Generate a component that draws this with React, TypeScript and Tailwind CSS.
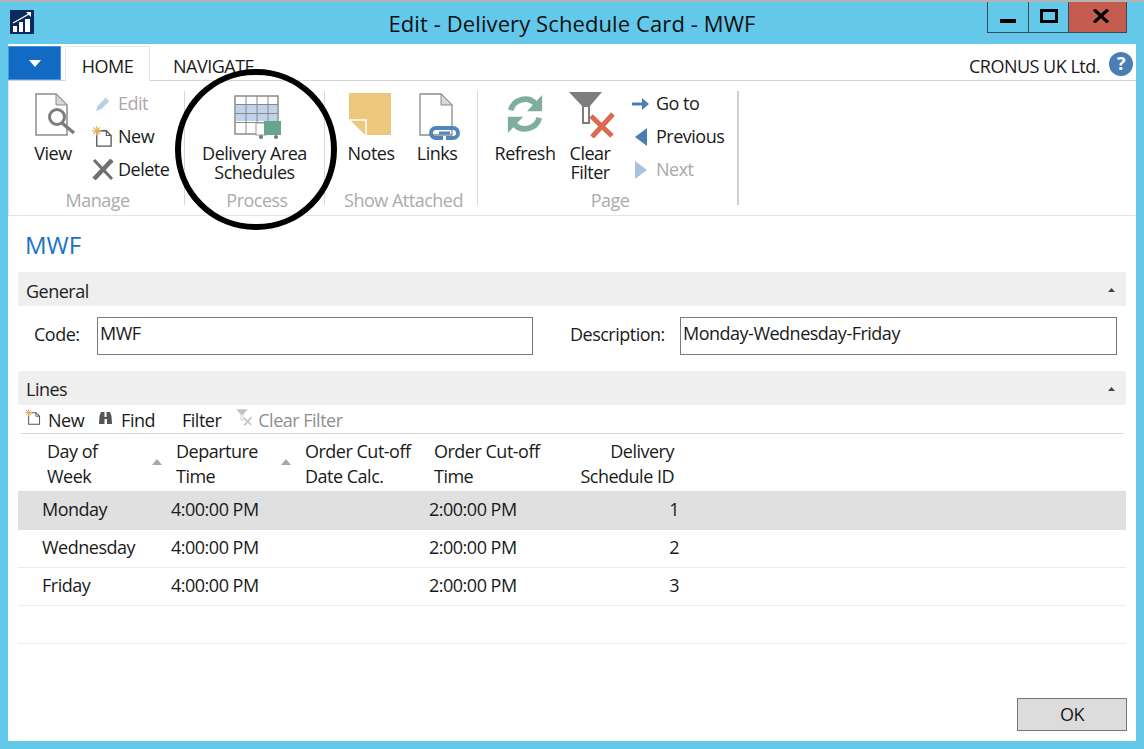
import type { ReactNode } from 'react'

const font = { fontFamily: '"Open Sans", "Noto Sans", sans-serif' }

function ViewIcon() {
  return (
    <svg className="ml-[6px]" width="42" height="43" viewBox="0 0 42 43" fill="none">
      <path d="M1 1h20l11 11v30H1z" fill="#fff" stroke="#8c8c8c" strokeWidth="1.500" />
      <path d="M21 1v11h11z" fill="#d8d8d8" stroke="#8c8c8c" />
      <circle cx="22" cy="24" r="7.500" fill="#fff" stroke="#7d7d7d" strokeWidth="3" />
      <path d="M27 30l12 10" stroke="#7d7d7d" strokeWidth="3.500" />
    </svg>
  )
}

function EditIcon() {
  return (
    <svg className="ml-[3px]" width="16" height="16" viewBox="0 0 18 18">
      <path d="M1 17l2-6L12 2l4 4-9 9z" fill="#b9cfe6" />
      <path d="M12 2l4 4-2 2-4-4z" fill="#cfcfcf" />
    </svg>
  )
}

function NewIcon({ small }: { small?: boolean }) {
  const size = small ? 16 : 21
  return (
    <svg width={size} height={size} viewBox="0 0 22 22" fill="none">
      <path d="M5 5h10l5 5v11H5z" stroke="#555" strokeWidth="1.400" fill="#fff" />
      <path d="M15 5v5h5" stroke="#555" strokeWidth="1.200" />
      <path d="M5 0v10M0 5h10M1.500 1.500l7 7M8.500 1.500l-7 7" stroke="#eab15a" strokeWidth="1.300" />
    </svg>
  )
}

function DeleteIcon() {
  return (
    <svg width="22" height="21" viewBox="0 0 22 21" fill="none">
      <path d="M2 1l18 19" stroke="#6f6f6f" strokeWidth="3" />
      <path d="M20 1L2 20" stroke="#6f6f6f" strokeWidth="4.500" />
    </svg>
  )
}

function ScheduleIcon() {
  return (
    <svg width="48" height="44" viewBox="0 0 48 44" fill="none">
      <rect x="1" y="1" width="43" height="38" fill="#fff" stroke="#8a8a8a" strokeWidth="1.500" />
      <rect x="2" y="10" width="41" height="16" fill="#c0d3ea" />
      <path d="M1 9.500h43M1 18.500h43M1 27.500h43M12 1v38M23 1v38M34 1v38" stroke="#8a8a8a" strokeWidth="1" />
      <rect x="22" y="28" width="10" height="12" fill="#fff" stroke="#9a9a9a" />
      <rect x="30" y="26" width="17" height="14" fill="#66a58e" />
      <circle cx="27" cy="42" r="2" fill="#777" />
      <circle cx="42" cy="42" r="2" fill="#777" />
    </svg>
  )
}

function NotesIcon() {
  return (
    <svg className="-ml-[2px]" width="42" height="42" viewBox="0 0 42 42">
      <path d="M0 0h42v42H16L0 26z" fill="#ecc77e" />
      <path d="M1 27h16v15" fill="none" stroke="#fff" strokeWidth="1.500" />
      <path d="M1 28l15 14H1z" fill="#fff" />
    </svg>
  )
}

function LinksIcon() {
  return (
    <svg className="ml-[6px]" width="42" height="47" viewBox="0 0 42 47" fill="none">
      <path d="M1 1h21l11 11v30H1z" fill="#fff" stroke="#8c8c8c" strokeWidth="1.300" />
      <path d="M22 1v11h11z" fill="#d9d9d9" stroke="#8c8c8c" />
      <path d="M22 35h-5a5 5 0 0 0 0 10h7" stroke="#4f87bd" strokeWidth="4" />
      <path d="M19 35h15a5 5 0 0 1 0 10h-7" stroke="#4f87bd" strokeWidth="4" />
      <path d="M20 40h11" stroke="#4f87bd" strokeWidth="3" />
    </svg>
  )
}

function RefreshIcon() {
  return (
    <svg width="42" height="40" viewBox="0 0 42 42" fill="none">
      <path d="M6 17A15.500 15.500 0 0 1 32 10" stroke="#7fae9c" strokeWidth="6" />
      <path d="M39 1v17H23z" fill="#7fae9c" />
      <path d="M36 25A15.500 15.500 0 0 1 10 32" stroke="#7fae9c" strokeWidth="6" />
      <path d="M3 41V24h16z" fill="#7fae9c" />
    </svg>
  )
}

function ClearFilterIcon({ small }: { small?: boolean }) {
  const w = small ? 17 : 48
  const h = small ? 17 : 46
  const funnel = small ? '#c2c2c2' : '#7d7d7d'
  const cross = small ? '#c6c6c6' : '#dc6a50'
  return (
    <svg className={small ? '' : 'ml-[6px]'} width={w} height={h} viewBox="0 0 48 46" fill="none">
      <path d="M0 0h33L21 14v18h-8V14z" fill={funnel} />
      <path d="M15 15v15h4V15z" fill="#fff" />
      <path d="M22 24l21 20M44 22L23 45" stroke={cross} strokeWidth="5" />
    </svg>
  )
}

function Arrow({ dir, faded }: { dir: 'right' | 'left' | 'next'; faded?: boolean }) {
  const color = faded ? '#a9c3de' : '#4a7fb5'
  if (dir === 'right') {
    return (
      <svg className="ml-[2px]" width="18" height="14" viewBox="0 0 18 14">
        <path d="M0 5.500h10V1l7 6-7 6V8.500H0z" fill={color} />
      </svg>
    )
  }
  return (
    <svg className="ml-[5px]" width="12" height="18" viewBox="0 0 12 18">
      <path d={dir === 'left' ? 'M12 0v18L0 9z' : 'M0 0v18l12-9z'} fill={color} />
    </svg>
  )
}

function SmallAction({ icon, label, faded }: { icon: ReactNode; label: string; faded?: boolean }) {
  return (
    <div className="h-[33px] flex items-center">
      <div className="w-[26px] flex justify-start shrink-0">{icon}</div>
      <span className={faded ? 'text-[#a8a8a8]' : 'text-[#1a1a1a]'}>{label}</span>
    </div>
  )
}

function BigAction({ icon, label, width, iconTop }: { icon: ReactNode; label: ReactNode; width: string; iconTop: string }) {
  return (
    <div className={`flex flex-col items-center ${width}`}>
      <div className={`h-[48px] flex items-start justify-center ${iconTop}`}>{icon}</div>
      <div className="mt-[5px] leading-[19px] text-center text-[#1a1a1a] whitespace-nowrap">{label}</div>
    </div>
  )
}

function Group({ label, width, children, last, nudge }: { label: string; width: string; children: ReactNode; last?: boolean; nudge?: string }) {
  return (
    <div className={`${width} h-[114px] mt-[10px] flex flex-col border-r ${last ? 'border-[#cfcfcf] border-r-2' : 'border-[#d8d8d8]'}`}>
      <div className="h-[99px] shrink-0 flex">{children}</div>
      <div className={`h-[20px] shrink-0 text-center text-[#ababab] leading-[20px] whitespace-nowrap ${nudge ?? ''}`}>{label}</div>
    </div>
  )
}

function SectionBar({ title, textPad }: { title: string; textPad: string }) {
  return (
    <div className="h-[34px] shrink-0 mx-[10px] bg-[#efefef] flex items-center justify-between pl-[8px] pr-[11px]">
      <span className={`text-[#222] ${textPad}`}>{title}</span>
      <svg width="7" height="5" viewBox="0 0 7 5"><path d="M0 5l3.500-4L7 5z" fill="#444" /></svg>
    </div>
  )
}

function SortMark() {
  return (
    <svg className="absolute right-[14px] top-[20px]" width="10" height="6" viewBox="0 0 10 6">
      <path d="M0 6l5-6 5 6z" fill="#a8a8a8" />
    </svg>
  )
}

const rows = [
  { day: 'Monday', id: 1, selected: true },
  { day: 'Wednesday', id: 2, selected: false },
  { day: 'Friday', id: 3, selected: false },
]

export default function App() {
  return (
    <div className="relative w-[1144px] h-[749px] overflow-hidden bg-[#63c8ea] border-t-2 border-[#b3b3b3] flex flex-col text-[18px] tracking-[-0.5px] text-[#1a1a1a]" style={font}>
      {/* Title bar */}
      <div className="relative h-[42px] shrink-0 flex items-start justify-center">
        <div className="absolute left-[10px] top-[8px] w-[24px] h-[24px] bg-[#0b2a5c]">
          <svg width="24" height="24" viewBox="0 0 24 24">
            <path d="M3 22v-6h4v6zM9 22V12h4v10zM15 22V9h5v13z" fill="#fff" />
            <path d="M3 13L19 4" stroke="#fff" strokeWidth="1.300" />
            <path d="M16 2h5v5z" fill="#fff" />
          </svg>
        </div>
        <div className="text-[22px] tracking-[0.1px] leading-[26px] mt-[8px] text-[#111]">Edit - Delivery Schedule Card - MWF</div>
        <div className="absolute left-[987px] top-0 h-[31px] flex border border-t-0 border-[#3b4a52]">
          <div className="w-[41px] flex items-center justify-center border-r border-[#3b4a52]">
            <div className="w-[16px] h-[4px] bg-black mt-[8px]" />
          </div>
          <div className="w-[39px] flex items-center justify-center">
            <div className="w-[18px] h-[14px] border-[3px] border-black -mt-[3px]" />
          </div>
          <div className="w-[58px] flex items-center justify-center bg-[#c45c50] border-l border-[#3b4a52] pl-[6px]">
            <svg className="-mt-[3px]" width="16" height="14" viewBox="0 0 16 14"><path d="M1 0.500l14 13M15 0.500L1 13.500" stroke="#000" strokeWidth="3.200" /></svg>
          </div>
        </div>
      </div>

      {/* Window body */}
      <div className="relative mx-[8px] mb-[8px] flex-1 bg-white flex flex-col">
        {/* Tab strip */}
        <div className="h-[37px] shrink-0 flex items-end border-b border-[#d4d4d4]">
          <div className="w-[53px] h-[34px] bg-[#116bc4] border border-[#4f95da] flex items-center justify-center">
            <svg width="12" height="7" viewBox="0 0 12 7"><path d="M0 0h12L6 7z" fill="#fff" /></svg>
          </div>
          <div className="ml-[4px] w-[85px] h-[35px] -mb-[1px] pt-[5px] bg-white border border-b-0 border-[#dfe8f0] flex items-center justify-center">HOME</div>
          <div className="ml-[23px] h-[34px] pt-[6px] flex items-center">NAVIGATE</div>
          <div className="ml-auto h-[34px] flex items-center pr-[3px]">
            <span className="pt-[6px]">CRONUS UK Ltd.</span>
            <div className="ml-[9px] mt-[1px] w-[24px] h-[24px] rounded-full bg-[#4a7fb5] flex items-center justify-center text-white font-bold">?</div>
          </div>
        </div>

        {/* Ribbon */}
        <div className="h-[135px] shrink-0 flex pl-[2px] bg-white border-b border-l border-[#e4e4e4]">
          <Group label="Manage" width="w-[174px]">
            <div className="w-[81px] pl-[12px]">
              <BigAction width="w-[60px]" iconTop="pt-[2px]" icon={<ViewIcon />} label="View" />
            </div>
            <div className="-mt-[4px]">
              <SmallAction faded icon={<EditIcon />} label="Edit" />
              <SmallAction icon={<NewIcon />} label="New" />
              <SmallAction icon={<DeleteIcon />} label="Delete" />
            </div>
          </Group>
          <Group label="Process" width="w-[140px]" nudge="pl-[5px]">
            <BigAction width="w-[140px]" iconTop="pt-[4px] pl-[6px]" icon={<ScheduleIcon />} label={<>Delivery Area<br />Schedules</>} />
          </Group>
          <Group label="Show Attached" width="w-[153px]" nudge="pl-[5px]">
            <BigAction width="w-[92px]" iconTop="pt-[2px]" icon={<NotesIcon />} label="Notes" />
            <BigAction width="w-[40px]" iconTop="pt-[2px]" icon={<LinksIcon />} label="Links" />
          </Group>
          <Group last label="Page" width="w-[261px]" nudge="pl-[5px]">
            <BigAction width="w-[94px]" iconTop="pt-[3px]" icon={<RefreshIcon />} label="Refresh" />
            <BigAction width="w-[36px]" iconTop="pt-[1px]" icon={<ClearFilterIcon />} label={<>Clear<br />Filter</>} />
            <div className="ml-[22px] -mt-[4px]">
              <SmallAction icon={<Arrow dir="right" />} label="Go to" />
              <SmallAction icon={<Arrow dir="left" />} label="Previous" />
              <SmallAction faded icon={<Arrow dir="next" faded />} label="Next" />
            </div>
          </Group>
        </div>

        {/* Card */}
        <h1 className="h-[56px] shrink-0 pl-[17px] pt-[14px] text-[24px] tracking-normal leading-[30px] text-[#1873c8]">MWF</h1>
        <SectionBar title="General" textPad="pt-[4px]" />
        <div className="h-[65px] shrink-0 flex items-start pt-[11px]">
          <label className="ml-[26px] w-[63px] h-[34px] flex items-center">Code:</label>
          <div className="w-[436px] h-[38px] border border-[#7a7a7a] flex items-center pl-[2px] pb-[5px]">MWF</div>
          <label className="ml-[37px] w-[110px] h-[34px] flex items-center">Description:</label>
          <div className="w-[437px] h-[38px] border border-[#7a7a7a] flex items-center pl-[2px] pb-[5px]">Monday-Wednesday-Friday</div>
        </div>
        <SectionBar title="Lines" textPad="pt-[3px]" />

        {/* Lines toolbar */}
        <div className="h-[29px] shrink-0 mx-[12px] border-b border-[#d8d8d8] flex items-center">
          <div className="ml-[5px] mr-[7px] -mt-[4px]"><NewIcon small /></div>
          <span className="pt-[2px]">New</span>
          <svg className="ml-[14px] mr-[8px] -mt-[3px]" width="15" height="14" viewBox="0 0 15 14">
            <path d="M1 13l0.500-8L3 1h3.500v5h2V1H12l1.500 4 0.500 8H9V8H6.500v5z" fill="#555" />
          </svg>
          <span className="pt-[2px]">Find</span>
          <span className="ml-[27px] pt-[2px]">Filter</span>
          <div className="ml-[15px] mr-[5px] -mt-[4px]"><ClearFilterIcon small /></div>
          <span className="pt-[2px] text-[#8f8f8f]">Clear Filter</span>
        </div>

        {/* Lines table */}
        <div className="mx-[10px]">
          <div className="h-[58px] grid grid-cols-[129px_129px_129px_129px_111px] pl-[29px] pt-[5px] leading-[25px] border-b border-[#dcdcdc]">
            <div className="relative">Day of<br />Week<SortMark /></div>
            <div className="relative">Departure<br />Time<SortMark /></div>
            <div className="whitespace-nowrap">Order Cut-off<br />Date Calc.</div>
            <div className="whitespace-nowrap">Order Cut-off<br />Time</div>
            <div className="-ml-[40px] text-right whitespace-nowrap">Delivery<br />Schedule ID</div>
          </div>
          {rows.map(r => (
            <div
              key={r.day}
              className={`h-[38px] grid grid-cols-[129px_129px_129px_129px_121px] pl-[24px] pb-[3px] items-center border-b ${r.selected ? 'bg-[#e0e0e0] border-[#e0e0e0]' : 'border-[#ececec]'}`}
            >
              <div>{r.day}</div>
              <div>4:00:00 PM</div>
              <div />
              <div>2:00:00 PM</div>
              <div className="text-right">{r.id}</div>
            </div>
          ))}
          <div className="h-[38px] border-b border-[#ececec]" />
        </div>

        {/* Footer */}
        <div className="flex-1 flex items-end justify-end pr-[9px] pb-[10px]">
          <button className="w-[110px] h-[33px] bg-[#dcdcdc] border border-[#777]">OK</button>
        </div>

        {/* Annotation circle over the ribbon */}
        <div className="absolute left-[167px] top-[25px] w-[162px] h-[161px] rounded-full border-[6px] border-black" />
      </div>
    </div>
  )
}
